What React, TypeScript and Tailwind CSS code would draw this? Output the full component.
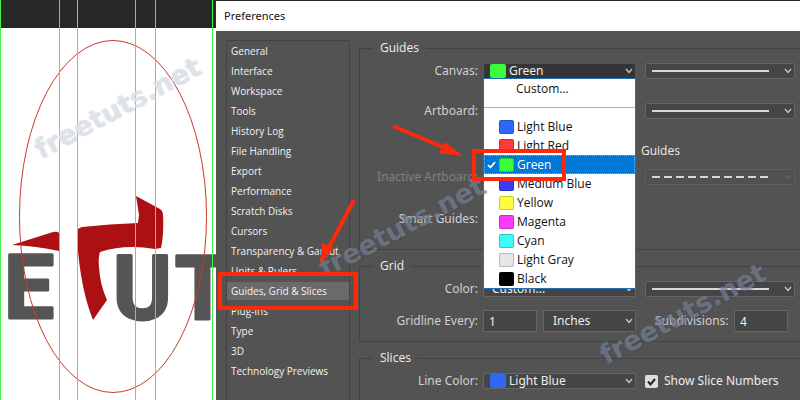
import React from "react";

const SECTIONS = [
  "General",
  "Interface",
  "Workspace",
  "Tools",
  "History Log",
  "File Handling",
  "Export",
  "Performance",
  "Scratch Disks",
  "Cursors",
  "Transparency & Gamut",
  "Units & Rulers",
  "Guides, Grid & Slices",
  "Plug-Ins",
  "Type",
  "3D",
  "Technology Previews",
];

const COLORS = [
  { name: "Light Blue", swatch: "bg-[#2f68f8]" },
  { name: "Light Red", swatch: "bg-[#fb3b3b]" },
  { name: "Green", swatch: "bg-[#3bfb3b]" },
  { name: "Medium Blue", swatch: "bg-[#3a3afa]" },
  { name: "Yellow", swatch: "bg-[#fdfd3c]" },
  { name: "Magenta", swatch: "bg-[#fb3bf9]" },
  { name: "Cyan", swatch: "bg-[#3bfbfb]" },
  { name: "Light Gray", swatch: "bg-[#e6e6e6]" },
  { name: "Black", swatch: "bg-black" },
];

const GUIDE_LINES = [0, 59, 77, 135, 155, 212];

function Chevron({ dim = false }: { dim?: boolean }) {
  return (
    <svg
      className={`pointer-events-none absolute top-1/2 right-[3px] -translate-y-1/2 ${dim ? "text-[#626262]" : "text-[#c8c8c8]"}`}
      width="8"
      height="6"
      viewBox="0 0 8 6"
      fill="none"
      stroke="currentColor"
      strokeWidth="1.3"
      aria-hidden="true"
    >
      <path d="M1 1l3 3.4L7 1" />
    </svg>
  );
}

function ColorSelect({
  id,
  value,
  swatch,
  open = false,
  children,
}: {
  id: string;
  value: string;
  swatch?: string;
  open?: boolean;
  children?: React.ReactNode;
}) {
  return (
    <div className="relative w-[153px] shrink-0">
      <select
        id={id}
        defaultValue={value}
        className={`block h-4 w-full appearance-none rounded-xs border text-xs leading-[14px] text-[#eeeeee] outline-none ${swatch ? "pl-[25px]" : "pl-2"} ${open ? "border-[#1d62b4] bg-[#353535]" : "border-[#666666] bg-[#454545]"}`}
      >
        <option>Custom...</option>
        {COLORS.map((c) => (
          <option key={c.name}>{c.name}</option>
        ))}
      </select>
      {swatch && <span className={`pointer-events-none absolute top-px left-[7px] h-3.5 w-4 rounded-xs ${swatch}`} />}
      <Chevron />
      {children}
    </div>
  );
}

function StyleSelect({ label, dashed = false }: { label: string; dashed?: boolean }) {
  return (
    <div className="relative mr-[5px] ml-[9px] min-w-0 flex-1">
      <select
        aria-label={label}
        disabled={dashed}
        className={`block h-4 w-full appearance-none rounded-xs border ${dashed ? "border-[#5e5e5e] bg-[#505050]" : "border-[#666666] bg-[#454545]"}`}
      >
        <option value="style" />
      </select>
      <span className="pointer-events-none absolute inset-y-0 right-[26px] left-[7px] flex items-center">
        <svg className="h-0.5 w-full" aria-hidden="true">
          <line x1="0" y1="1" x2="100%" y2="1" stroke="#d8d8d8" strokeWidth="2" strokeDasharray={dashed ? "8 4" : undefined} />
        </svg>
      </span>
      <Chevron dim={dashed} />
    </div>
  );
}

function ColorMenu() {
  return (
    <ul
      role="listbox"
      aria-label="Canvas color"
      className="absolute top-[15px] left-0 z-10 w-full border border-[#1d6fb8] bg-white font-['Open_Sans',sans-serif] text-xs text-[#111111]"
    >
      <li role="option" aria-selected="false" className="h-[19px] pl-8 leading-[19px]">
        Custom...
      </li>
      <li role="separator" className="my-[9px] h-px bg-[#b0b0b0]" />
      {COLORS.map((c) => {
        const selected = c.name === "Green";
        return (
          <li
            key={c.name}
            role="option"
            aria-selected={selected}
            className={`flex h-[19px] items-center ${selected ? "border border-dotted border-[#e39a4a] bg-[#0078d7] pl-0.5 text-white" : "pl-[3px]"}`}
          >
            <span className="w-3">
              {selected && (
                <svg width="9" height="8" viewBox="0 0 9 8" fill="none" stroke="white" strokeWidth="1.8" aria-hidden="true">
                  <path d="M1 4l2.4 2.500L8 1" />
                </svg>
              )}
            </span>
            <span className={`mr-[3px] h-3.5 w-[15px] rounded-xs border border-black/20 ${c.swatch}`} />
            {c.name}
          </li>
        );
      })}
    </ul>
  );
}

const LABEL = "w-[118px] shrink-0 whitespace-nowrap text-right";
const GROUP = "min-w-0 border-y border-l border-[#434343]";
const LEGEND = "ml-[13px] h-4 px-[7px] font-['Open_Sans',sans-serif] text-xs leading-4 text-[#eeeeee]";
const FIELD = "h-[22px] w-[54px] border border-[#666666] bg-[#454545] pl-[5px] text-xs text-[#eeeeee]";

function Artwork() {
  return (
    <section aria-label="Canvas" className="relative w-[216px] shrink-0 bg-white">
      <div className="h-7 bg-[#282828]" />
      <svg className="absolute inset-0 h-full w-full" viewBox="0 0 216 400" preserveAspectRatio="xMinYMin slice">
        <g fill="#555555" stroke="#555555" strokeWidth="3" strokeLinejoin="round" className="font-[Roboto,sans-serif] text-[89px] font-bold">
          <text x="4" y="318">E</text>
          <text x="113" y="319">U</text>
          <text x="175" y="319">T</text>
        </g>
        <g fill="#ac1012">
          <path d="M12 245L53 232Q58 231 59 233V251Q36 246 12 245Z" />
          <path d="M77 231Q78 228 82 227Q110 224 138 223L139 215L136 196L160 209Q163 211 163 214Q164 235 161 248L155 249Q125 244 100 252Q98 258 99 267Q100 285 107 300L93 320Q85 300 81 275Q77 250 77 231Z" />
        </g>
        <ellipse cx="113" cy="216.500" rx="93.500" ry="176" fill="none" stroke="#c93a2c" />
        {GUIDE_LINES.map((x) => (
          <rect key={x} x={x} y="0" width="1" height="400" fill="#4af04a" shapeRendering="crispEdges" />
        ))}
      </svg>
    </section>
  );
}

function Watermark({ place }: { place: string }) {
  return (
    <span
      aria-hidden="true"
      className={`pointer-events-none absolute z-20 -translate-x-1/2 -translate-y-1/2 -rotate-28 font-['DejaVu_Sans',sans-serif] text-[27px] leading-8 font-bold ${place}`}
    >
      freetuts.net
    </span>
  );
}

function Annotations() {
  return (
    <svg className="pointer-events-none absolute inset-0 z-30 h-full w-full" fill="none" stroke="#fa2a0a" aria-hidden="true">
      <rect x="220" y="274" width="136" height="34" strokeWidth="4" />
      <rect x="474" y="151" width="90" height="28" strokeWidth="4" />
      <path d="M393 126L445 148M354 200L328 249" strokeWidth="4" />
      <path d="M463 156L439 153L445 142ZM320 264L322 243L334 248Z" fill="#fa2a0a" stroke="none" />
    </svg>
  );
}

export default function App() {
  return (
    <main className="relative flex min-h-screen overflow-hidden bg-[#535353] font-['Noto_Sans',sans-serif] text-xs text-[#d0d0d0]">
      <Artwork />
      <section aria-label="Preferences" className="flex min-w-0 flex-1 flex-col border-t border-[#282828]">
        <h1 className="h-[30px] bg-white pl-2 text-[11px] leading-[30px] text-[#111111]">Preferences</h1>
        <div className="flex flex-1 pt-[9px] pl-[10px]">
          <nav className="w-[124px] shrink-0 self-stretch border-x border-t border-[#434343] font-['Open_Sans',sans-serif] text-[10px]">
            <ul className="flex flex-col gap-0.5 pt-px">
              {SECTIONS.map((s) => (
                <li key={s}>
                  <button
                    type="button"
                    className={`block h-[18px] w-full pl-1 text-left leading-[18px] whitespace-nowrap text-[#f2f2f2] ${s === "Guides, Grid & Slices" ? "bg-[#6a6a6a]" : ""}`}
                  >
                    {s}
                  </button>
                </li>
              ))}
            </ul>
          </nav>

          <form className="ml-[9px] flex min-w-0 flex-1 flex-col gap-2">
            <fieldset className={`${GROUP} h-[210px]`}>
              <legend className={LEGEND}>Guides</legend>
              <div className="flex flex-col">
                <div className="flex h-[30px] items-center">
                  <label htmlFor="canvas" className={`${LABEL} mr-[5px]`}>Canvas:</label>
                  <ColorSelect id="canvas" value="Green" swatch="bg-[#3bfb3b]" open>
                    <ColorMenu />
                  </ColorSelect>
                  <StyleSelect label="Canvas guide style" />
                </div>
                <div className="mt-[10px] flex h-[30px] items-center">
                  <label htmlFor="artboard" className={`${LABEL} mr-[5px]`}>Artboard:</label>
                  <ColorSelect id="artboard" value="Light Blue" swatch="bg-[#2f68f8]" />
                  <StyleSelect label="Artboard guide style" />
                </div>
                <p className="mt-[17px] ml-[281px] font-['Open_Sans',sans-serif] leading-4 text-[#eeeeee]">Guides</p>
                <div className="mt-[3px] flex h-[30px] items-center">
                  <label htmlFor="inactive" className={`${LABEL} mr-[5px] text-[#808080]`}>Inactive Artboard:</label>
                  <ColorSelect id="inactive" value="Light Blue" swatch="bg-[#2f68f8]" />
                  <StyleSelect label="Inactive artboard guide style" dashed />
                </div>
                <div className="mt-3 flex h-[30px] items-center">
                  <label htmlFor="smart" className={`${LABEL} mr-[5px]`}>Smart Guides:</label>
                  <ColorSelect id="smart" value="Magenta" swatch="bg-[#fb3bf9]" />
                </div>
              </div>
            </fieldset>

            <fieldset className={`${GROUP} h-[84px]`}>
              <legend className={LEGEND}>Grid</legend>
              <div className="flex h-[30px] items-center">
                <label htmlFor="grid-color" className={`${LABEL} mr-[5px]`}>Color:</label>
                <ColorSelect id="grid-color" value="Custom..." />
                <StyleSelect label="Grid line style" />
              </div>
              <div className="mt-1 flex h-[26px] items-center">
                <label htmlFor="gridline" className={`${LABEL} mr-[5px]`}>Gridline Every:</label>
                <input id="gridline" defaultValue="1" className={FIELD} />
                <div className="relative ml-[6px] w-[93px]">
                  <select
                    aria-label="Gridline unit"
                    className="block h-[22px] w-full appearance-none border border-[#666666] bg-[#454545] pl-[9px] text-xs text-[#eeeeee]"
                  >
                    <option>Inches</option>
                  </select>
                  <Chevron />
                </div>
                <label htmlFor="subdivisions" className="ml-[19px] w-[79px] shrink-0">Subdivisions:</label>
                <input id="subdivisions" defaultValue="4" className={FIELD} />
              </div>
            </fieldset>

            <fieldset className={`${GROUP} flex-1 border-b-0`}>
              <legend className={LEGEND}>Slices</legend>
              <div className="flex h-[30px] items-center">
                <label htmlFor="line-color" className={`${LABEL} mr-[5px]`}>Line Color:</label>
                <ColorSelect id="line-color" value="Light Blue" swatch="bg-[#2f68f8]" />
                <label className="ml-[9px] flex items-center gap-1.5 whitespace-nowrap text-[#eeeeee]">
                  <span className="relative block size-[13px]">
                    <input type="checkbox" defaultChecked className="block size-full appearance-none rounded-xs bg-[#dddddd]" />
                    <svg className="pointer-events-none absolute inset-0" viewBox="0 0 13 13" fill="none" stroke="#222222" strokeWidth="2" aria-hidden="true">
                      <path d="M3 6.500l2.500 3L10 4" />
                    </svg>
                  </span>
                  Show Slice Numbers
                </label>
              </div>
            </fieldset>
          </form>
        </div>
      </section>

      <Watermark place="top-[108px] left-[117px] text-[#dfe4ec]/80 [text-shadow:1px_1px_1px_#c3c9d299]" />
      <Watermark place="top-[227px] left-[402px] text-[#8493aa]/55 [text-shadow:1px_1px_1px_#3c424c66]" />
      <Watermark place="top-[314px] left-[683px] text-[#8493aa]/55 [text-shadow:1px_1px_1px_#3c424c66]" />
      <Annotations />
    </main>
  );
}
